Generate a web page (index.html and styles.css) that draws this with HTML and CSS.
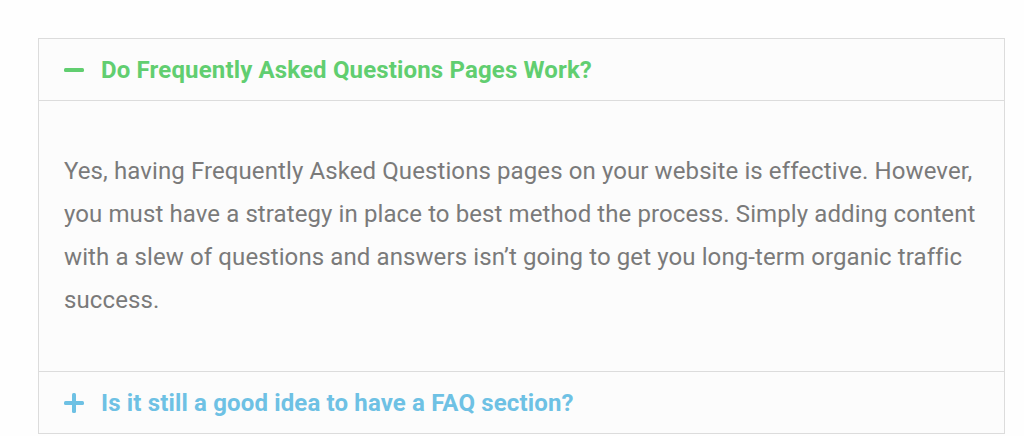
FILE: index.html
```html
<!DOCTYPE html>
<html>
<head>
<meta charset="utf-8">
<link rel="stylesheet" href="styles.css">
</head>
<body>
<div class="faq">
  <div class="item">
    <div class="q q-open">
      <svg class="icon" viewBox="0 0 20 20" width="20" height="20"><rect x="0" y="8" width="20" height="4" rx="1.5" fill="#61ce70"/></svg>
      <span class="title">Do Frequently Asked Questions Pages Work?</span>
    </div>
    <div class="answer">
      <p>Yes, having Frequently Asked Questions pages on your website is effective. However, you must have a strategy in place to best method the process. Simply adding content with a slew of questions and answers isn’t going to get you long-term organic traffic success.</p>
    </div>
  </div>
  <div class="item">
    <div class="q q-closed">
      <svg class="icon" viewBox="0 0 20 20" width="20" height="20"><rect x="0" y="8" width="20" height="4" rx="1.5" fill="#6ec1e4"/><rect x="8" y="0" width="4" height="20" rx="1.5" fill="#6ec1e4"/></svg>
      <span class="title">Is it still a good idea to have a FAQ section?</span>
    </div>
  </div>
</div>
</body>
</html>
```
FILE: styles.css
```css
html, body {
  margin: 0;
  padding: 0;
  background: #fefefe;
}
body {
  padding: 38px 18px 0 38px;
  font-family: Roboto, "Liberation Sans", sans-serif;
}
.faq {
  width: 967px;
  background: #fcfcfc;
}
.item {
  border: 1px solid #dcdcdc;
  border-bottom: none;
}
.item:last-child {
  border-bottom: 1px solid #dcdcdc;
}
.q {
  height: 61px;
  display: flex;
  align-items: center;
  padding-left: 25px;
  gap: 17px;
  font-size: 24px;
  font-weight: 700;
  letter-spacing: 0.15px;
}
.q-open { color: #61ce70; border-bottom: 1px solid #dcdcdc; }
.q-closed { color: #6ec1e4; }
.icon { flex: none; }
.answer {
  padding: 49px 25px 49px;
}
.answer p {
  margin: 0;
  color: #7a7a7a;
  font-size: 24px;
  line-height: 43px;
  letter-spacing: 0.1px;
}
```
